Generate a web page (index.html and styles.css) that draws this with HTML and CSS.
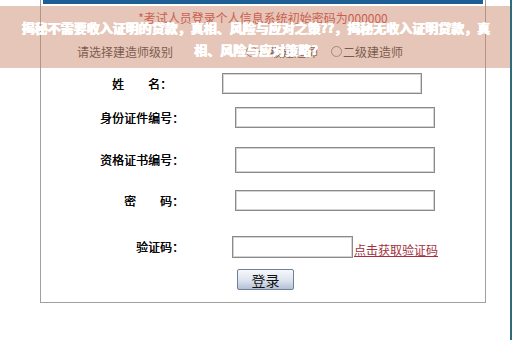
FILE: index.html
```html
<!DOCTYPE html>
<html lang="zh-CN">
<head>
  <meta charset="UTF-8">
  <meta name="viewport" content="width=device-width, initial-scale=1.0">
  <title>建造师登录</title>
  <link rel="stylesheet" href="styles.css">
</head>
<body>

<div class="page">
  <div class="panel">
    <div class="panel-top"></div>
    <p class="notice">*考试人员登录个人信息系统初始密码为000000</p>
    <div class="level">
      <span class="level-label">请选择建造师级别</span>
      <label class="radio first"><span class="dot"></span>一级建造师</label>
      <label class="radio"><span class="dot"></span>二级建造师</label>
    </div>
    <form class="login" onsubmit="event.preventDefault();">
      <div class="row row-name">
        <span class="label">姓　　名：</span>
        <input class="field" type="text" name="name">
      </div>
      <div class="row row-id">
        <span class="label">身份证件编号：</span>
        <input class="field" type="text" name="idcard">
      </div>
      <div class="row row-cert">
        <span class="label">资格证书编号：</span>
        <input class="field tall" type="text" name="cert">
      </div>
      <div class="row row-pass">
        <span class="label">密　　码：</span>
        <input class="field" type="password" name="password">
      </div>
      <div class="row row-code">
        <span class="label">验证码：</span>
        <input class="field short" type="text" name="code">
        <a href="#" class="get-code">点击获取验证码</a>
      </div>
      <div class="row row-submit">
        <button type="submit" class="btn-login">登录</button>
      </div>
    </form>
  </div>

  <div class="banner">揭秘不需要收入证明的贷款，真相、风险与应对之策??，揭秘无收入证明贷款，真相、风险与应对策略?</div>
</div>

</body>
</html>
```

FILE: styles.css
```css
body {
  margin: 0;
  font-family: "Noto Sans CJK SC", "Noto Sans", sans-serif;
  background: #ffffff;
  color: #000;
}
.page {
  position: relative;
  width: 510px;
  height: 340px;
  border-right: 2px solid #2f6b78;
  overflow: hidden;
}
.panel {
  margin-left: 40px;
  width: 444px;
  height: 302px;
  border: 1px solid #a0a0a0;
  border-top: none;
  background: #fff;
}
.panel-top {
  height: 4px;
  margin: 0 2px;
  background: #1d5f94;
}
.notice {
  margin: 6px 0 0;
  font-size: 12px;
  line-height: 16px;
  color: #d03535;
  text-align: center;
}
.level {
  display: flex;
  align-items: center;
  margin-top: 16px;
  padding-left: 36px;
  height: 18px;
  font-size: 12px;
  color: #333;
}
.radio {
  display: flex;
  align-items: center;
  margin-left: 13px;
}
.radio.first {
  margin-left: 73px;
}
.dot {
  width: 9px;
  height: 9px;
  border: 1px solid #888;
  border-radius: 50%;
  margin-right: 1px;
  background: #fff;
}
.login {
  margin: 13px 0 0;
}
.row {
  display: flex;
  align-items: center;
}
.label {
  width: 143px;
  text-align: right;
  font-size: 12px;
  line-height: 16px;
  color: #000;
  text-shadow: 0.3px 0 0 #000;
}
.field {
  box-sizing: border-box;
  width: 200px;
  height: 21px;
  margin: 0 0 0 51px;
  padding: 0 3px;
  border: 1px solid #8a8a8a;
  box-shadow: inset 0 0 0 1px #d4d4d4;
  background: #fff;
  font: inherit;
  font-size: 12px;
}
.field.tall {
  height: 26px;
}
.field.short {
  width: 121px;
  height: 22px;
  margin-left: 48px;
}
.row-name .label {
  width: 131px;
}
.row-name .field {
  margin-left: 50px;
}
.row-id {
  margin-top: 13px;
}
.row-cert {
  margin-top: 19px;
}
.row-pass {
  margin-top: 17px;
}
.row-code {
  margin-top: 25px;
}
.get-code {
  margin: 6px 0 0 1px;
  font-size: 12px;
  line-height: 16px;
  color: #a3303c;
  text-decoration: underline;
}
.row-submit {
  margin-top: 11px;
  padding-left: 196px;
}
.btn-login {
  box-sizing: border-box;
  width: 57px;
  height: 21px;
  padding: 0;
  border: 1px solid #6f7f99;
  border-radius: 2px;
  background: linear-gradient(#f6f8fb, #dde3ee 55%, #b4c0d6);
  font-family: "Noto Sans CJK SC", sans-serif;
  font-size: 14px;
  line-height: 18px;
  color: #111;
  cursor: pointer;
}
.banner {
  position: absolute;
  top: 6px;
  left: 0;
  width: 512px;
  box-sizing: border-box;
  padding: 11px 20px 7px;
  background: rgba(200, 136, 106, 0.48);
  color: #fff;
  font-size: 13px;
  font-weight: bold;
  line-height: 22px;
  text-align: center;
  text-shadow: 0.5px 0 0 #fff, -0.5px 0 0 #fff, 0 0.4px 0 #fff;
}
```
